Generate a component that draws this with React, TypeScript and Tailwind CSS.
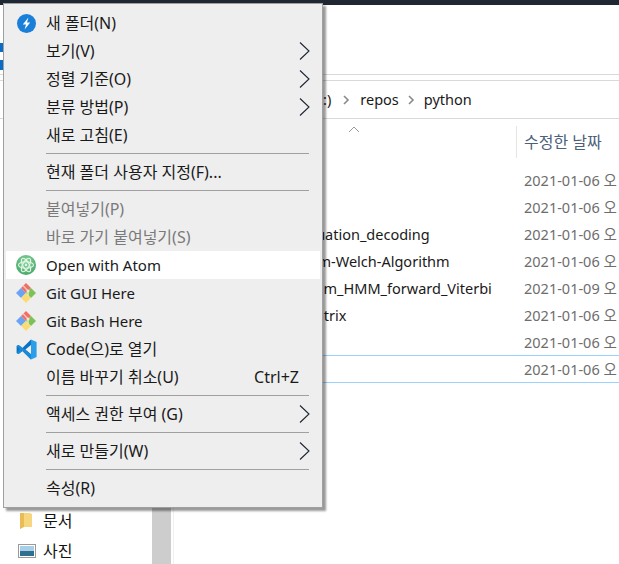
const AtomBolt = () => (
  <svg width="19" height="19" viewBox="0 0 19 19">
    <circle cx="9.5" cy="9.5" r="9.5" fill="#1a7fd8" />
    <path d="M11.4 3.4 5.8 10.4h3.2l-1.4 5.2 5.6-7h-3.2z" fill="#fff" />
  </svg>
);

const AtomLogo = () => (
  <svg width="20" height="20" viewBox="0 0 20 20">
    <defs>
      <radialGradient id="atomGreen" cx="50%" cy="35%" r="70%">
        <stop offset="0%" stopColor="#8fd6a0" />
        <stop offset="100%" stopColor="#3fa565" />
      </radialGradient>
    </defs>
    <circle cx="10" cy="10" r="10" fill="url(#atomGreen)" />
    <g fill="none" stroke="#e4f5e8" strokeWidth="1.1">
      <ellipse cx="10" cy="10" rx="7.5" ry="3.2" />
      <ellipse cx="10" cy="10" rx="7.5" ry="3.2" transform="rotate(60 10 10)" />
      <ellipse cx="10" cy="10" rx="7.5" ry="3.2" transform="rotate(120 10 10)" />
    </g>
    <circle cx="10" cy="10" r="1.2" fill="#e4f5e8" />
  </svg>
);

const GitLogo = () => (
  <svg width="22" height="22" viewBox="0 0 22 22">
    <path d="M1 11 6 6l5 5-5 5z" fill="#6aa5f5" />
    <path d="M6 6l5-5 5 5-5 5z" fill="#ee6f64" />
    <path d="M11 11l5-5 5 5-5 5z" fill="#7cc256" />
    <path d="M6 16l5-5 5 5-5 5z" fill="#fbdc74" />
    <path d="M8 3.5 13 9" stroke="#f6c4bd" strokeWidth="1.4" />
    <path d="M13 9v5" stroke="#d8efc8" strokeWidth="1.4" />
    <circle cx="13" cy="9" r="1.5" fill="#f6e3de" />
  </svg>
);

const VsCodeLogo = () => (
  <svg width="21" height="21" viewBox="0 0 21 21">
    <path d="M15 .6 20.6 3v15l-5.6 2.6z" fill="#2a9fe8" />
    <path d="M15 .6 6.4 9 2.6 6 .6 7v7l2 1 3.8-3L15 20.6v-5.4L9.4 10.5 15 6z" fill="#0c72c4" />
    <path d="M.6 7l2-1L15 15.2v5.4L6.4 12 2.6 15l-2-1 3.2-3.5z" fill="#1a8ad8" />
  </svg>
);

const Chevron = () => (
  <svg width="11" height="18" viewBox="0 0 11 18" className="ml-auto mr-[10px] shrink-0">
    <path d="M1 .5 10 9l-9 8.5" fill="none" stroke="#1c2430" strokeWidth="1.1" />
  </svg>
);

const Crumb = () => (
  <svg width="8" height="10" viewBox="0 0 8 10" className="shrink-0">
    <path d="M2 1l4 4-4 4" fill="none" stroke="#8a8a8a" strokeWidth="1.6" />
  </svg>
);

type Item = {
  label: string;
  icon?: React.ReactNode;
  arrow?: boolean;
  disabled?: boolean;
  active?: boolean;
  shortcut?: string;
  latin?: boolean;
};

const Separator = () => (
  <div className="my-1 ml-[40px] mr-[11px] h-px bg-[#a0a0a0]" />
);

const MenuItem = ({ label, icon, arrow, disabled, active, shortcut, latin }: Item) => (
  <div
    className={`flex h-7 items-center ${latin ? "text-[15px]" : "text-base"} ${active ? "bg-white" : ""} ${
      disabled ? "text-[#7a7a7a]" : "text-[#1a1a1a]"
    }`}
  >
    <div className="flex w-[40px] shrink-0 items-center justify-center">{icon}</div>
    <span className="whitespace-nowrap">{label}</span>
    {shortcut && <span className="ml-auto mr-[21px]">{shortcut}</span>}
    {arrow && <Chevron />}
  </div>
);

const ContextMenu = () => (
  <div className="absolute left-[3px] top-[3px] w-[320px] border border-[#a0a0a0] bg-[#eeeeee] px-[2px] py-[5px] shadow-[3px_3px_2px_rgba(0,0,0,0.4)]">
    <MenuItem label="새 폴더(N)" icon={<AtomBolt />} />
    <MenuItem label="보기(V)" arrow />
    <MenuItem label="정렬 기준(O)" arrow />
    <MenuItem label="분류 방법(P)" arrow />
    <MenuItem label="새로 고침(E)" />
    <Separator />
    <MenuItem label="현재 폴더 사용자 지정(F)..." />
    <Separator />
    <MenuItem label="붙여넣기(P)" disabled />
    <MenuItem label="바로 가기 붙여넣기(S)" disabled />
    <MenuItem label="Open with Atom" icon={<AtomLogo />} active latin />
    <MenuItem label="Git GUI Here" icon={<GitLogo />} latin />
    <MenuItem label="Git Bash Here" icon={<GitLogo />} latin />
    <MenuItem label="Code(으)로 열기" icon={<VsCodeLogo />} />
    <MenuItem label="이름 바꾸기 취소(U)" shortcut="Ctrl+Z" />
    <Separator />
    <MenuItem label="액세스 권한 부여 (G)" arrow />
    <Separator />
    <MenuItem label="새로 만들기(W)" arrow />
    <Separator />
    <MenuItem label="속성(R)" />
  </div>
);

const rows = [
  { name: "", indent: "pl-[100px]", date: "2021-01-06 오" },
  { name: "", indent: "pl-[100px]", date: "2021-01-06 오" },
  { name: "evaluation_decoding", indent: "pl-[115px]", date: "2021-01-06 오" },
  { name: "Baum-Welch-Algorithm", indent: "pl-[117px]", date: "2021-01-06 오" },
  { name: "Baum_HMM_forward_Viterbi", indent: "pl-[123px]", date: "2021-01-09 오" },
  { name: "matrix", indent: "pl-[128px]", date: "2021-01-06 오" },
  { name: "", indent: "pl-[100px]", date: "2021-01-06 오" },
  { name: "", indent: "pl-[100px]", date: "2021-01-06 오", selected: true },
];

const FileList = () => (
  <div className="min-w-0 flex-1 pt-[7px]">
    <div className="flex h-8 items-center">
      <div className="w-[342px] shrink-0 self-start pl-[174px]">
        <svg width="12" height="7" viewBox="0 0 12 7">
          <path d="M1 6l5-5 5 5" fill="none" stroke="#9a9a9a" />
        </svg>
      </div>
      <div className="flex h-8 flex-1 items-center whitespace-nowrap border-l border-[#e5e5e5] pl-[7px] text-base text-[#4c607a]">
        수정한 날짜
      </div>
    </div>
    <div className="mt-2 text-[14.5px]">
      {rows.map((row, i) => (
        <div
          key={i}
          className={`flex items-center overflow-hidden whitespace-nowrap border-t pt-[2px] ${
            row.selected ? "h-[28px] border-b border-[#99d1ff]" : "h-[27px] border-transparent"
          }`}
        >
          <div className={`w-[343px] shrink-0 overflow-hidden text-[#1a1a1a] ${row.indent}`}>
            {row.name}
          </div>
          <div className="pl-[7px] text-[#6d6d6d]">{row.date}</div>
        </div>
      ))}
    </div>
  </div>
);

const Sidebar = () => (
  <div className="flex w-[152px] shrink-0 flex-col justify-end text-base">
    <div className="flex h-[29px] items-center pl-[19px] text-[#111]">
      <svg width="14" height="18" viewBox="0 0 14 18" className="mr-[10px] shrink-0">
        <path d="M1 1h10l2 1v13H4l-3 2z" fill="#f6d77e" />
        <path d="M1 1h4v14l-4 2z" fill="#e9bc55" />
      </svg>
      문서
    </div>
    <div className="flex h-[29px] items-center pl-[18px] pt-[2px] text-[#111]">
      <svg width="18" height="14" viewBox="0 0 18 14" className="mr-[7px] shrink-0">
        <rect x="0.5" y="0.5" width="17" height="13" fill="#fff" stroke="#9a9a9a" />
        <rect x="2" y="2" width="14" height="5" fill="#a8cfe8" />
        <rect x="2" y="7" width="14" height="5" fill="#2f6f8f" />
      </svg>
      사진
    </div>
  </div>
);

export default function App() {
  return (
    <div className="relative h-[564px] w-[619px] overflow-hidden bg-white font-['Noto_Sans','Noto_Sans_CJK_KR',sans-serif]">
      <div className="flex h-full flex-col">
        <div className="h-[5px] shrink-0 bg-[#1f2733]" />
        {/* ribbon */}
        <div className="h-[70px] shrink-0 border-b border-[#d9d9d9] pt-[38px]">
          <div className="h-[9px] w-[3px] bg-[#0a6cc4]" />
          <div className="h-2 w-[3px] bg-white" />
          <div className="h-[10px] w-[3px] bg-[#0a6cc4]" />
        </div>
        {/* address bar */}
        <div className="mt-[5px] flex h-[39px] shrink-0 items-center border-y border-[#d9d9d9] pl-[323px] text-[14.5px] text-[#1a1a1a]">
          <span>:)</span>
          <span className="ml-[11px] mr-[10px] flex"><Crumb /></span>
          <span>repos</span>
          <span className="ml-[8px] mr-[9px] flex"><Crumb /></span>
          <span>python</span>
        </div>
        <div className="flex min-h-0 flex-1">
          <Sidebar />
          <div className="w-[19px] shrink-0 bg-[#cdcdcd]" />
          <div className="w-[3px] shrink-0 border-r border-[#f0f0f0]" />
          <FileList />
        </div>
      </div>
      <ContextMenu />
    </div>
  );
}
